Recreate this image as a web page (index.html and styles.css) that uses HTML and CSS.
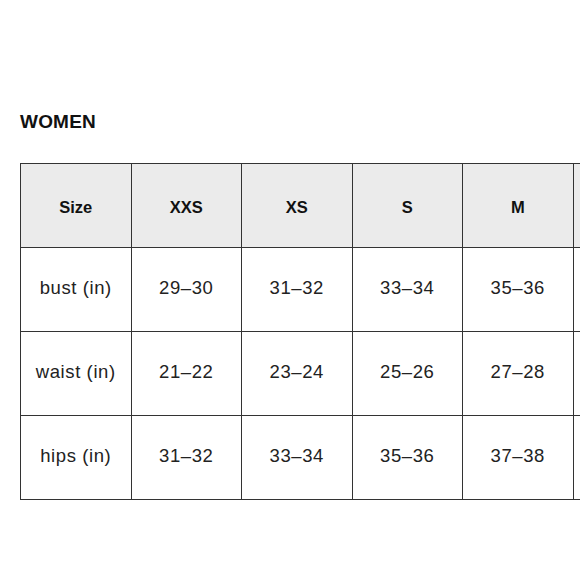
FILE: index.html
```html
<!DOCTYPE html>
<html>
<head>
<meta charset="utf-8">
<link rel="stylesheet" href="styles.css">
</head>
<body>
<div class="page">
  <h2 class="title">WOMEN</h2>
  <div class="wrap">
    <table class="chart">
      <colgroup>
        <col class="c"><col class="c"><col class="c"><col class="c"><col class="c"><col class="c">
      </colgroup>
      <thead>
        <tr><th>Size</th><th>XXS</th><th>XS</th><th>S</th><th>M</th><th></th></tr>
      </thead>
      <tbody>
        <tr><td>bust (in)</td><td>29–30</td><td>31–32</td><td>33–34</td><td>35–36</td><td></td></tr>
        <tr><td>waist (in)</td><td>21–22</td><td>23–24</td><td>25–26</td><td>27–28</td><td></td></tr>
        <tr><td>hips (in)</td><td>31–32</td><td>33–34</td><td>35–36</td><td>37–38</td><td></td></tr>
      </tbody>
    </table>
  </div>
</div>
</body>
</html>
```
FILE: styles.css
```css
html, body {
  margin: 0;
  padding: 0;
  background: #fff;
  overflow: hidden;
}
.page {
  width: 580px;
  height: 580px;
  overflow: hidden;
  padding: 0 0 0 20px;
  box-sizing: border-box;
  font-family: "Liberation Sans", Arial, sans-serif;
}
.title {
  margin: 0;
  padding-top: 110px;
  height: 28px;
  padding-bottom: 25px;
  font-size: 19px;
  line-height: 24px;
  font-weight: 700;
  color: #111;
  letter-spacing: 0.2px;
}
.wrap {
  width: 700px;
}
.chart {
  border-collapse: collapse;
  table-layout: fixed;
  width: 663px;
}
.chart .c { width: 110.5px; }
.chart th, .chart td {
  border: 1px solid #333;
  height: 83px;
  padding: 0;
  text-align: center;
  vertical-align: middle;
}
.chart th {
  background: #ebebeb;
  font-size: 16.5px;
  font-weight: 700;
  color: #111;
  height: 80px;
  padding-top: 3px;
}
.chart td {
  font-size: 18.5px;
  color: #222;
  letter-spacing: 0.6px;
  height: 80px;
  padding-bottom: 3px;
}
```
